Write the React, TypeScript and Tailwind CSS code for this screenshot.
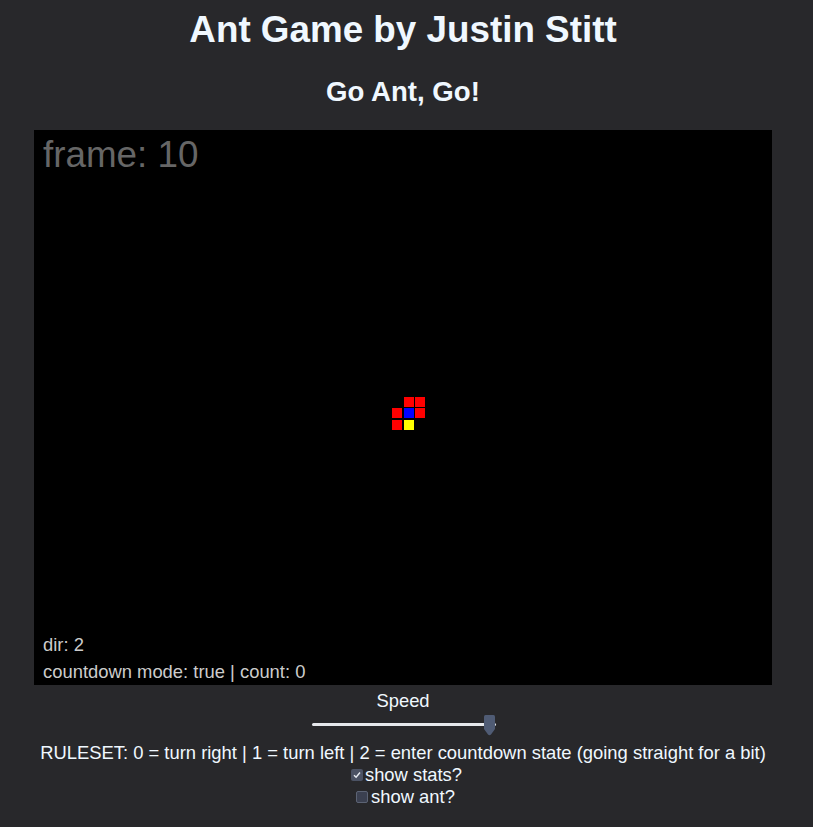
import React from 'react';

type Cell = { c: number; r: number; fill: string };

const COLS = [358, 370, 381];
const ROWS = [267, 278, 290];

const CELLS: Cell[] = [
  { c: 1, r: 0, fill: '#ff0000' },
  { c: 2, r: 0, fill: '#ff0000' },
  { c: 0, r: 1, fill: '#ff0000' },
  { c: 1, r: 1, fill: '#0000ff' },
  { c: 2, r: 1, fill: '#ff0000' },
  { c: 0, r: 2, fill: '#ff0000' },
  { c: 1, r: 2, fill: '#ffff00' },
];

function Board() {
  return (
    <div className="relative mx-auto mt-[22px] h-[555px] w-[738px] bg-black">
      <svg className="absolute inset-0" width={738} height={555} shapeRendering="crispEdges">
        {CELLS.map((cell, i) => (
          <rect key={i} x={COLS[cell.c]} y={ROWS[cell.r]} width={10} height={10} fill={cell.fill} />
        ))}
      </svg>
      {/* canvas text */}
      <div className="absolute left-[9px] top-[7px] text-[36.8px] leading-none text-[#666666]">frame: 10</div>
      <div className="absolute left-[9px] top-[506px] text-[18.4px] leading-none text-[#cccccc]">dir: 2</div>
      <div className="absolute left-[9px] top-[533px] text-[18.4px] leading-none text-[#cccccc]">
        countdown mode: true | count: 0
      </div>
    </div>
  );
}

function Slider() {
  return (
    <div className="mt-[3px] flex justify-center">
      <div className="relative ml-[2px] h-[21px] w-[184px]">
        <div className="absolute left-0 right-0 top-[8px] h-[3px] rounded-full bg-[#e6e8ec]" />
        <svg className="absolute right-[1px] top-0" width={11} height={21} viewBox="0 0 11 21">
          <path
            d="M1.5 0 H9.5 Q11 0 11 1.5 V14 L7 19.6 Q5.5 21 4 19.6 L0 14 V1.5 Q0 0 1.5 0 Z"
            fill="#4f5b74"
          />
        </svg>
      </div>
    </div>
  );
}

function Check({ checked, label, ml, gap, size }: { checked: boolean; label: string; ml: number; gap: number; size: number }) {
  return (
    <div className="flex h-[22px] items-center justify-center">
      <span style={{ marginLeft: ml, marginRight: gap, width: size, height: size }} className="flex items-center justify-center">
        {checked ? (
          <span className="flex h-full w-full items-center justify-center rounded-[2px] bg-[#4b5264]">
            <svg width={8} height={8} viewBox="0 0 8 8">
              <path d="M1 4.2 L3.1 6.3 L7 1.5" fill="none" stroke="#e8ecf2" strokeWidth={1.4} />
            </svg>
          </span>
        ) : (
          <span className="h-full w-full rounded-[2px] border border-[#5c6374] bg-[#3b4050]" />
        )}
      </span>
      <span>{label}</span>
    </div>
  );
}

export default function App() {
  return (
    <div className="min-h-screen bg-[#28282b] font-['Liberation_Sans',Arial,sans-serif] text-[#f0f8ff]">
      <div className="w-[806px] pb-[20px] pt-[9px] text-center">
        <h1 className="text-[36.8px] font-bold leading-[normal]">Ant Game by Justin Stitt</h1>
        <h2 className="mt-[25px] text-[27.6px] font-bold leading-[normal]">Go Ant, Go!</h2>
        <Board />
        <div className="mt-[5px] text-[18.4px] leading-[normal]">Speed</div>
        <Slider />
        <div className="mt-[6px] text-[18.4px]">
          <div className="h-[22px] leading-[22px]">
            RULESET: 0 = turn right | 1 = turn left | 2 = enter countdown state (going straight for a bit)
          </div>
          <Check checked label="show stats?" ml={7} gap={2} size={12} />
          <Check checked={false} label="show ant?" ml={5} gap={3} size={12} />
        </div>
      </div>
    </div>
  );
}
